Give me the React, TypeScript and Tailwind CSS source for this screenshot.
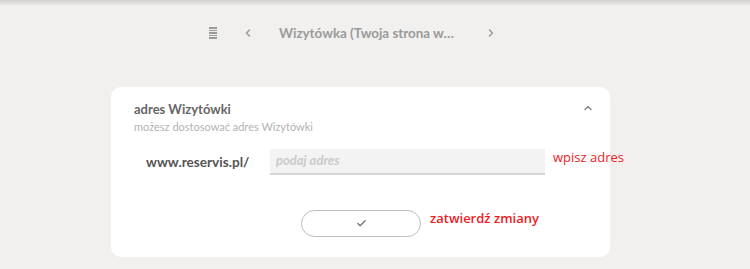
import React from 'react';
import { ChevronLeft, ChevronRight, ChevronUp, Check } from 'lucide-react';

function TopNav() {
  return (
    <div className="h-[66px] flex items-center">
      <div className="flex items-center ml-[209px] text-[#9a9a9a]">
        {/* list icon */}
        <div className="flex flex-col gap-[1px] w-[8px]">
          <span className="h-[2px] bg-[#9a9a9a]" />
          <span className="h-[1px] bg-[#9a9a9a]" />
          <span className="h-[2px] bg-[#9a9a9a]" />
          <span className="h-[1px] bg-[#9a9a9a]" />
          <span className="h-[2px] bg-[#9a9a9a]" />
        </div>
        <ChevronLeft size={12} strokeWidth={3} className="ml-[25px]" />
        <span className="ml-[25px] w-[206px] text-[13.4px] font-bold text-[#9a9a9a] whitespace-nowrap">
          Wizytówka (Twoja strona w…
        </span>
        <ChevronRight size={12} strokeWidth={3} />
      </div>
    </div>
  );
}

function AddressCard() {
  return (
    <div className="ml-[111px] mt-[21px] w-[499px] h-[170px] bg-white rounded-[10px] pl-[23px] pr-[16px] pt-[13px]">
      <div className="flex items-start justify-between">
        <div>
          <div className="text-[13px] font-bold text-[#666] leading-[18px]">adres Wizytówki</div>
          <div className="text-[11px] text-[#b3b3b3] leading-[14px] mt-[2px]">możesz dostosować adres Wizytówki</div>
        </div>
        <ChevronUp size={12} strokeWidth={3} className="text-[#888] mt-[2px]" />
      </div>

      <div className="flex items-center mt-[15px]">
        <span className="shrink-0 ml-[12px] w-[124px] text-[13.6px] font-bold text-[#555] whitespace-nowrap">www.reservis.pl/</span>
        <div className="shrink-0 w-[275px] h-[26px] bg-[#f3f3f3] border-b-[2px] border-[#d6d6d6] flex items-center pl-[6px]">
          <span className="text-[13px] italic font-bold text-[#cacaca]">podaj adres</span>
        </div>
        <span
          className="shrink-0 ml-[8px] mt-[-9px] text-[13px] text-[#ee1c25] whitespace-nowrap"
          style={{ fontFamily: '"Open Sans", sans-serif' }}
        >
          wpisz adres
        </span>
      </div>

      <div className="flex items-center mt-[35px]">
        <button className="shrink-0 ml-[167px] w-[120px] h-[27px] rounded-full border border-[#bdbdbd] flex items-center justify-center">
          <Check size={11} strokeWidth={3} className="text-[#777]" />
        </button>
        <span
          className="shrink-0 ml-[9px] mt-[-9px] text-[13px] font-semibold text-[#ee1c25] whitespace-nowrap"
          style={{ fontFamily: '"Open Sans", sans-serif' }}
        >
          zatwierdź zmiany
        </span>
      </div>
    </div>
  );
}

export default function App() {
  return (
    <div className="w-[750px] h-[269px] bg-[#f1f0ee] overflow-hidden" style={{ fontFamily: 'Lato, "Open Sans", sans-serif' }}>
      <div className="h-[6px] bg-gradient-to-b from-[#d2d0cd] to-[#f1f0ee]" />
      <div className="mt-[-6px]">
        <TopNav />
      </div>
      <AddressCard />
    </div>
  );
}
